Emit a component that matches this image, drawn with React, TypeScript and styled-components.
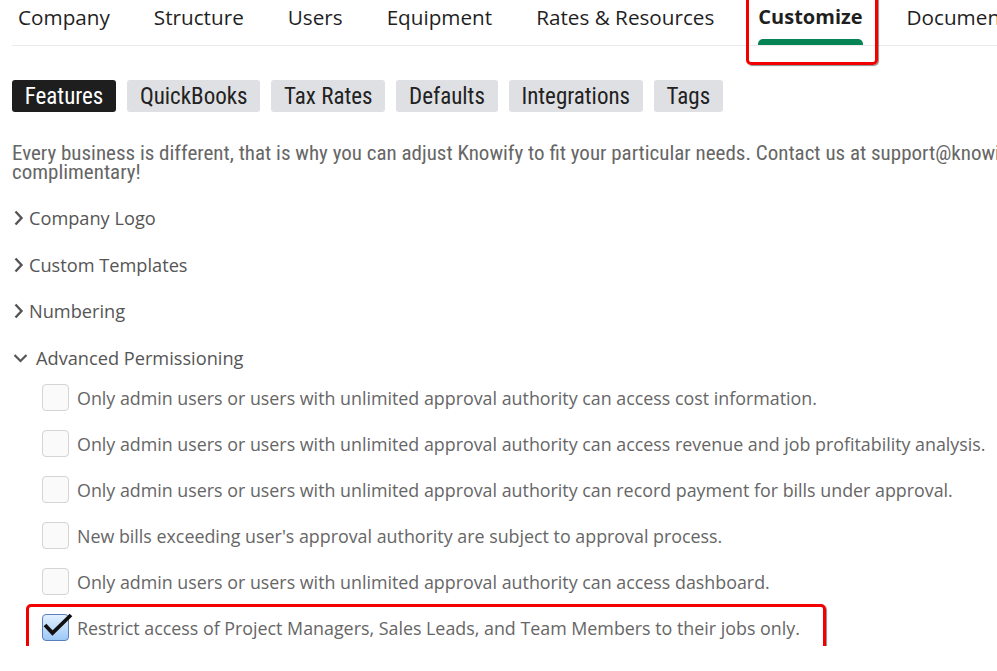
import styled, { createGlobalStyle } from 'styled-components';

const GlobalStyle = createGlobalStyle`
  html, body {
    margin: 0;
    padding: 0;
    background: #fff;
    overflow: hidden;
  }
  body {
    font-family: "Open Sans", "Liberation Sans", sans-serif;
  }
`;

const Page = styled.div`
  width: 1400px;
  padding: 0 0 0 12px;
`;

const TopNav = styled.nav`
  display: flex;
  gap: 44px;
  height: 45px;
  padding-left: 6px;
  border-bottom: 1px solid #ebebeb;
`;

const NavItem = styled.div<{ $active?: boolean }>`
  position: relative;
  display: flex;
  flex-direction: column;
  justify-content: space-between;
  font-size: ${(p) => (p.$active ? '20px' : '20.7px')};
  line-height: 24px;
  padding-top: 5px;
  color: #1f1f1f;
  font-weight: ${(p) => (p.$active ? 700 : 400)};
  white-space: nowrap;

  ${(p) =>
    p.$active &&
    `
    &::after {
      content: "";
      position: absolute;
      top: -12px;
      left: -12px;
      right: -15px;
      bottom: -20px;
      border: 3px solid #f20000;
      border-radius: 5px;
      box-shadow: 1px 1px 1px rgba(0,0,0,0.45);
    }
  `}
`;

const Indicator = styled.span`
  display: block;
  height: 6px;
  background: #078456;
  border-radius: 5px 5px 0 0;
`;

const PillRow = styled.div`
  display: flex;
  gap: 11px;
  margin-top: 34px;
`;

const Pill = styled.button<{ $active?: boolean }>`
  height: 32px;
  padding: 0 12.75px;
  border: none;
  border-radius: 3px;
  background: ${(p) => (p.$active ? '#1e1e1e' : '#dfe0e3')};
  color: ${(p) => (p.$active ? '#fff' : '#222')};
  font-family: "Liberation Sans Narrow", "Roboto Condensed", "Liberation Sans", sans-serif;
  font-size: 23px;
  cursor: pointer;
`;

const Intro = styled.p`
  margin: 32px 0 0;
  font-family: "Liberation Sans Narrow", "Roboto Condensed", "Liberation Sans", sans-serif;
  font-size: 21px;
  line-height: 19px;
  color: #666;
  white-space: nowrap;
`;

const Sections = styled.div`
  display: flex;
  flex-direction: column;
  gap: 10.5px;
  margin-top: 18px;
`;

const SectionHeader = styled.div<{ $open?: boolean }>`
  display: flex;
  align-items: center;
  gap: ${(p) => (p.$open ? '8px' : '5px')};
  height: 36px;
  padding-left: 1px;
  font-size: 18.2px;
  color: #555;
  cursor: pointer;
`;

const CheckList = styled.div`
  display: flex;
  flex-direction: column;
  gap: 10px;
  margin-top: 4px;
`;

const CheckRow = styled.label<{ $highlight?: boolean }>`
  position: relative;
  display: flex;
  align-items: center;
  gap: 8px;
  height: 36px;
  padding-left: 30px;
  font-size: 17.85px;
  color: #666;
  white-space: nowrap;

  ${(p) =>
    p.$highlight &&
    `
    &::after {
      content: "";
      position: absolute;
      top: -6px;
      left: 14px;
      width: 794px;
      bottom: -9px;
      border: 3px solid #f20000;
      border-radius: 5px;
      box-shadow: 1px 1px 1px rgba(0,0,0,0.45);
    }
  `}
`;

const Box = styled.span<{ $checked?: boolean }>`
  position: relative;
  flex: none;
  width: 25px;
  height: 25px;
  border: 1px solid ${(p) => (p.$checked ? '#5b7fb8' : '#d4d4d4')};
  border-radius: 4px;
  background: ${(p) =>
    p.$checked ? 'linear-gradient(#e2f0ff, #9cc8f5)' : '#fafafa'};
`;

const CheckMark = styled.svg`
  position: absolute;
  left: 0;
  top: -3px;
  width: 30px;
  height: 26px;
`;

const Chevron = ({ open }: { open?: boolean }) =>
  open ? (
    <svg width="15" height="10" viewBox="0 0 15 10">
      <path d="M1.5 2 L7.5 8 L13.5 2" fill="none" stroke="#555" strokeWidth="2.2" />
    </svg>
  ) : (
    <svg width="11" height="16" viewBox="0 0 11 16">
      <path d="M2.5 1.5 L8.5 8 L2.5 14.5" fill="none" stroke="#555" strokeWidth="2.4" />
    </svg>
  );

const Check = () => (
  <CheckMark viewBox="0 0 30 26">
    <path d="M2 13 L9.5 21 L28 3" fill="none" stroke="#111" strokeWidth="3.8" />
  </CheckMark>
);

const navItems = ['Company', 'Structure', 'Users', 'Equipment', 'Rates & Resources', 'Customize', 'Documents'];
const pills = ['Features', 'QuickBooks', 'Tax Rates', 'Defaults', 'Integrations', 'Tags'];
const sections = ['Company Logo', 'Custom Templates', 'Numbering'];
const permissions = [
  { label: 'Only admin users or users with unlimited approval authority can access cost information.' },
  { label: 'Only admin users or users with unlimited approval authority can access revenue and job profitability analysis.' },
  { label: 'Only admin users or users with unlimited approval authority can record payment for bills under approval.' },
  { label: "New bills exceeding user's approval authority are subject to approval process." },
  { label: 'Only admin users or users with unlimited approval authority can access dashboard.' },
  { label: 'Restrict access of Project Managers, Sales Leads, and Team Members to their jobs only.', checked: true },
];

export default function App() {
  return (
    <>
      <GlobalStyle />
      <Page>
        <TopNav>
          {navItems.map((n) => (
            <NavItem key={n} $active={n === 'Customize'}>
              {n}
              {n === 'Customize' && <Indicator />}
            </NavItem>
          ))}
        </TopNav>
        <PillRow>
          {pills.map((p) => (
            <Pill key={p} $active={p === 'Features'}>{p}</Pill>
          ))}
        </PillRow>
        <Intro>
          Every business is different, that is why you can adjust Knowify to fit your particular needs. Contact us at support@knowify.com, most customizations are
          <br />
          complimentary!
        </Intro>
        <Sections>
          {sections.map((s) => (
            <SectionHeader key={s}>
              <Chevron />
              {s}
            </SectionHeader>
          ))}
          <div>
            <SectionHeader $open>
              <Chevron open />
              Advanced Permissioning
            </SectionHeader>
            <CheckList>
              {permissions.map((p) => (
                <CheckRow key={p.label} $highlight={p.checked}>
                  <Box $checked={p.checked}>{p.checked && <Check />}</Box>
                  {p.label}
                </CheckRow>
              ))}
            </CheckList>
          </div>
        </Sections>
      </Page>
    </>
  );
}
